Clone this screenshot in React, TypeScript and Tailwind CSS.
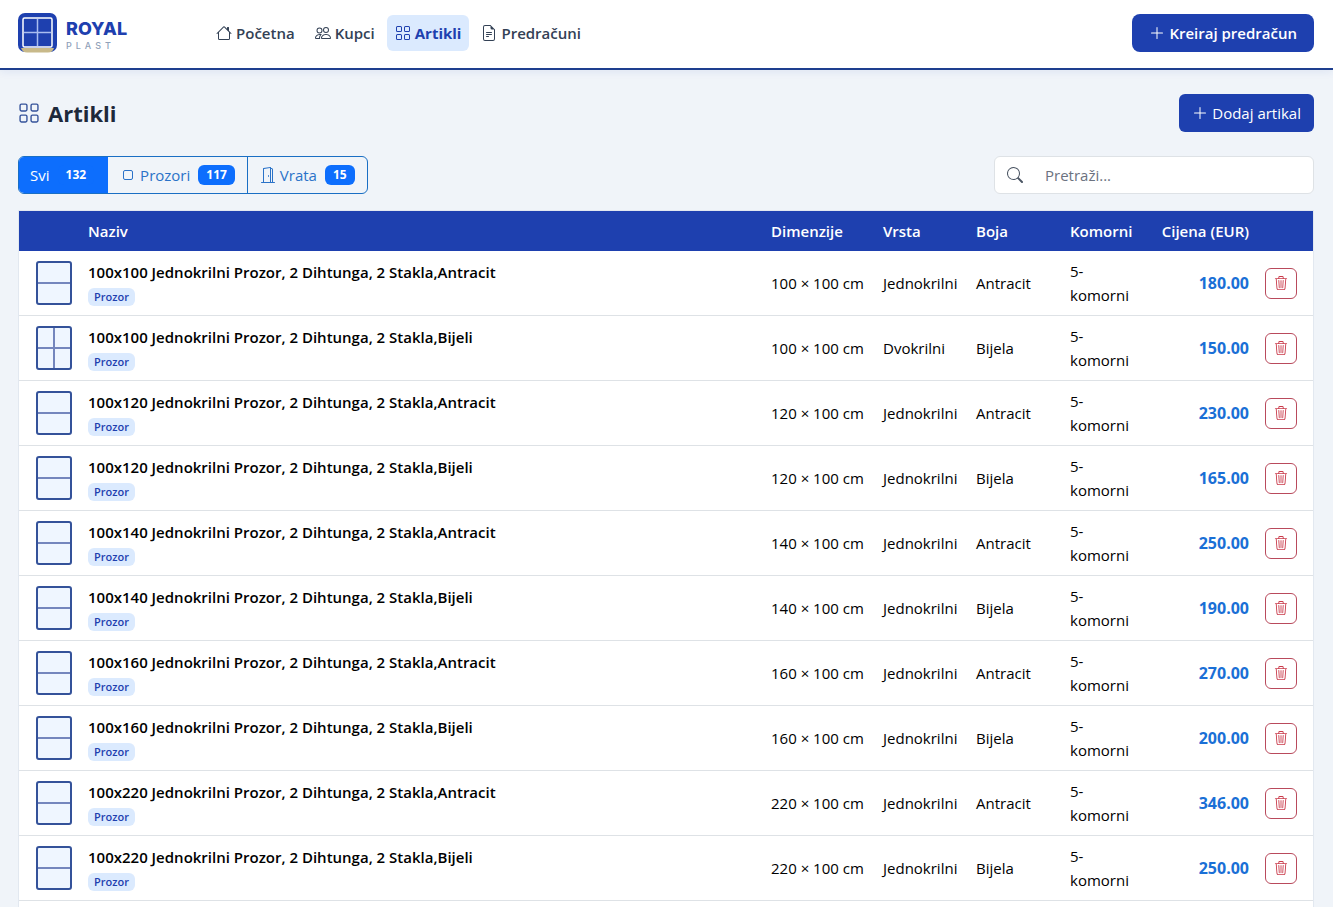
import clsx from 'clsx'
import type { IconType } from 'react-icons'
import {
    BsDoorOpen,
    BsFileEarmarkText,
    BsGrid,
    BsHouse,
    BsPeople,
    BsPlusLg,
    BsSearch,
    BsTrash3,
} from 'react-icons/bs'

interface Article {
    name: string
    size: string
    kind: 'Jednokrilni' | 'Dvokrilni'
    color: string
    price: string
}

const NAV_ITEMS: { label: string; icon: IconType; active?: boolean }[] = [
    { label: 'Početna', icon: BsHouse },
    { label: 'Kupci', icon: BsPeople },
    { label: 'Artikli', icon: BsGrid, active: true },
    { label: 'Predračuni', icon: BsFileEarmarkText },
]

const NAME = 'Jednokrilni Prozor, 2 Dihtunga, 2 Stakla,'

const ARTICLES: Article[] = [
    { name: `100x100 ${NAME}Antracit`, size: '100 × 100 cm', kind: 'Jednokrilni', color: 'Antracit', price: '180.00' },
    { name: `100x100 ${NAME}Bijeli`, size: '100 × 100 cm', kind: 'Dvokrilni', color: 'Bijela', price: '150.00' },
    { name: `100x120 ${NAME}Antracit`, size: '120 × 100 cm', kind: 'Jednokrilni', color: 'Antracit', price: '230.00' },
    { name: `100x120 ${NAME}Bijeli`, size: '120 × 100 cm', kind: 'Jednokrilni', color: 'Bijela', price: '165.00' },
    { name: `100x140 ${NAME}Antracit`, size: '140 × 100 cm', kind: 'Jednokrilni', color: 'Antracit', price: '250.00' },
    { name: `100x140 ${NAME}Bijeli`, size: '140 × 100 cm', kind: 'Jednokrilni', color: 'Bijela', price: '190.00' },
    { name: `100x160 ${NAME}Antracit`, size: '160 × 100 cm', kind: 'Jednokrilni', color: 'Antracit', price: '270.00' },
    { name: `100x160 ${NAME}Bijeli`, size: '160 × 100 cm', kind: 'Jednokrilni', color: 'Bijela', price: '200.00' },
    { name: `100x220 ${NAME}Antracit`, size: '220 × 100 cm', kind: 'Jednokrilni', color: 'Antracit', price: '346.00' },
    { name: `100x220 ${NAME}Bijeli`, size: '220 × 100 cm', kind: 'Jednokrilni', color: 'Bijela', price: '250.00' },
]

function Logo() {
    return (
        <a href="#" className="flex w-[190px] items-center gap-2">
            <svg width="40" height="40" viewBox="0 0 40 40" aria-hidden="true">
                <rect x="0" y="0" width="39" height="39" rx="7" fill="#1e40af" />
                <path d="M3 35h33c-1 3-3 4.500-6 4.500H9c-3 0-5-1.500-6-4.500Z" fill="#c8b98a" />
                <rect x="5" y="5" width="29" height="29" rx="1.500" fill="#1e40af" stroke="#fff" strokeWidth="1.500" />
                <path d="M19.500 6v27M6 19.500h27" stroke="#a9bdf0" strokeWidth="1.500" />
            </svg>
            <span className="flex flex-col pt-1 font-[Inter,sans-serif]">
                <span className="text-lg leading-[22px] font-extrabold text-[#1e40af]">ROYAL</span>
                <span className="text-[9px] leading-3 font-medium tracking-[4px] text-slate-400">PLAST</span>
            </span>
        </a>
    )
}

function Header() {
    return (
        <header className="flex items-center border-b-2 border-[#1e3f8f] bg-white pt-[13px] pr-[19px] pb-[15px] pl-[18px] shadow-[0_2px_8px_rgba(30,64,175,0.08)]">
            <Logo />
            <nav className="flex flex-1 gap-1">
                {NAV_ITEMS.map(({ label, icon: Icon, active }) => (
                    <a
                        key={label}
                        href="#"
                        className={clsx(
                            'flex items-center gap-1 rounded-md px-2 py-1.5',
                            active ? 'bg-[#dbeafe] font-bold text-[#1e40af]' : 'font-semibold text-[#334155]',
                        )}
                    >
                        <Icon size={16} />
                        {label}
                    </a>
                ))}
            </nav>
            <button type="button" className="flex h-[38px] items-center gap-1 rounded-lg bg-[#1e40af] px-[17px] font-semibold text-white">
                <BsPlusLg size={16} />
                Kreiraj predračun
            </button>
        </header>
    )
}

function CountBadge({ count }: { count: number }) {
    return (
        <span className="rounded-md bg-[#0d6efd] px-2 text-xs leading-5 font-bold text-white">
            {count}
        </span>
    )
}

function Filters() {
    return (
        <div className="flex h-[38px] overflow-hidden rounded-md border border-[#1a6fc4] text-[#2a72c8]">
            <button type="button" className="flex items-center gap-2 bg-[#0d6efd] pr-[14px] pl-[11px] text-white">
                Svi
                <CountBadge count={132} />
            </button>
            <button type="button" className="flex items-center gap-2 px-3">
                <span className="flex items-center gap-1">
                    <svg width="16" height="16" viewBox="0 0 16 16" fill="none" stroke="currentColor" aria-hidden="true">
                        <rect x="3.500" y="3.500" width="9" height="9" rx="1.500" />
                    </svg>
                    Prozori
                </span>
                <CountBadge count={117} />
            </button>
            <button type="button" className="flex items-center gap-2 border-l border-[#1a6fc4] px-3">
                <span className="flex items-center gap-1">
                    <BsDoorOpen size={16} />
                    Vrata
                </span>
                <CountBadge count={15} />
            </button>
        </div>
    )
}

function WindowThumb({ split }: { split: boolean }) {
    return (
        <svg width="36" height="44" viewBox="0 0 36 44" aria-hidden="true">
            <rect x="1" y="1" width="34" height="42" rx="2" fill="#eff6ff" stroke="#34529a" strokeWidth="2" />
            <path d={split ? 'M2 22h32M18 2v40' : 'M2 22h32'} stroke="#7486bd" strokeWidth="2" />
        </svg>
    )
}

function ArticleRow({ article }: { article: Article }) {
    return (
        <tr className="h-[65px] *:border-b *:border-[#dee2e6]">
            <td className="pl-[17px]">
                <WindowThumb split={article.kind === 'Dvokrilni'} />
            </td>
            <td className="px-2">
                <div className="flex flex-col items-start gap-1">
                    <span className="font-semibold">{article.name}</span>
                    <span className="rounded-md bg-[#dbeafe] px-1.5 text-[11px] leading-[18px] font-semibold text-[#1e40af]">
                        Prozor
                    </span>
                </div>
            </td>
            <td className="px-2 whitespace-nowrap">{article.size}</td>
            <td className="px-2">{article.kind}</td>
            <td className="px-2">{article.color}</td>
            <td className="px-2">
                5-
                <br />
                komorni
            </td>
            <td className="px-2 text-right text-base font-bold text-[#1a6fd6]">{article.price}</td>
            <td className="px-2">
                <button
                    type="button"
                    aria-label="Obriši"
                    className="flex h-[31px] w-8 items-center justify-center rounded-md border border-[#b94a5c] text-[#c93a4a]"
                >
                    <BsTrash3 size={14} />
                </button>
            </td>
        </tr>
    )
}

function ArticleTable() {
    return (
        <div className="border-x border-t border-[#e2e8f0] bg-white pb-1.5">
            <table className="w-full table-fixed border-separate border-spacing-0 text-left text-black">
                <colgroup>
                    <col className="w-[61px]" />
                    <col />
                    <col className="w-[112px]" />
                    <col className="w-[93px]" />
                    <col className="w-[94px]" />
                    <col className="w-[89px]" />
                    <col className="w-[106px]" />
                    <col className="w-[56px]" />
                </colgroup>
                <thead>
                    <tr className="h-10 bg-[#1e40af] text-white">
                        <th />
                        <th className="px-2 font-semibold">Naziv</th>
                        <th className="px-2 font-semibold">Dimenzije</th>
                        <th className="px-2 font-semibold">Vrsta</th>
                        <th className="px-2 font-semibold">Boja</th>
                        <th className="px-2 font-semibold">Komorni</th>
                        <th className="px-2 text-right font-semibold whitespace-nowrap">Cijena (EUR)</th>
                        <th />
                    </tr>
                </thead>
                <tbody>
                    {ARTICLES.map((article) => (
                        <ArticleRow key={article.name} article={article} />
                    ))}
                </tbody>
            </table>
        </div>
    )
}

export default function App() {
    return (
        <div className="min-h-screen bg-[#f0f4f9] font-['Open_Sans','Noto_Sans',sans-serif] text-[15px] leading-6">
            <Header />
            <main className="pt-6 pr-[19px] pl-[18px]">
                <div className="flex items-center justify-between">
                    <h1 className="flex items-center gap-2 text-[22px] font-bold text-[#1e293b]">
                        <BsGrid size={22} className="text-[#34529a]" />
                        Artikli
                    </h1>
                    <button type="button" className="flex h-[38px] items-center gap-1 rounded-md bg-[#1e40af] px-[13px] text-white">
                        <BsPlusLg size={16} />
                        Dodaj artikal
                    </button>
                </div>
                <div className="mt-6 mb-4 flex items-center justify-between">
                    <Filters />
                    <label className="flex h-[38px] w-80 items-center gap-[22px] rounded-md border border-[#dee2e6] bg-white pl-3">
                        <BsSearch size={16} className="text-[#4b5563]" />
                        <input
                            type="text"
                            aria-label="Pretraži"
                            placeholder="Pretraži..."
                            className="min-w-0 flex-1 bg-transparent outline-none placeholder:text-[#6b7280]"
                        />
                    </label>
                </div>
                <ArticleTable />
            </main>
        </div>
    )
}
